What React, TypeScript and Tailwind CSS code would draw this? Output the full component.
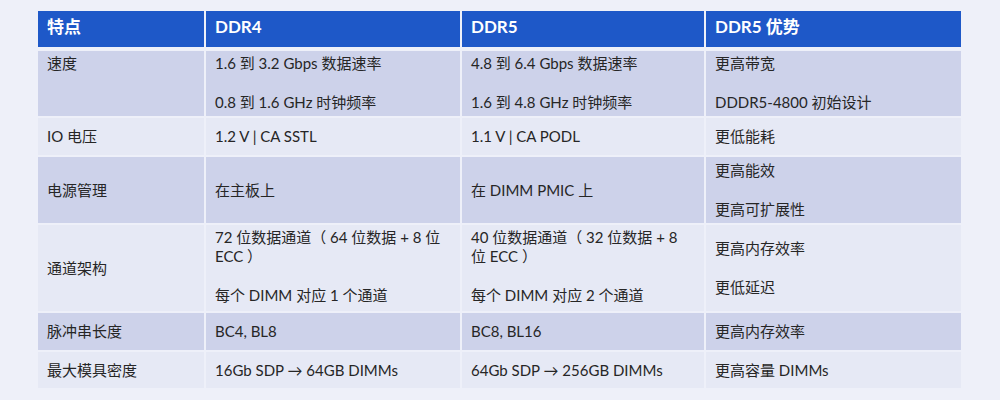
import React from "react";

type Cell = {
  lines: string[];
  align?: "top" | "center";
};

const rows: { bg: string; h: string; cells: Cell[] }[] = [
  {
    bg: "bg-[#cdd2ea]",
    h: "h-[65px]",
    cells: [
      { lines: ["速度"], align: "top" },
      { lines: ["1.6 到 3.2 Gbps 数据速率", "0.8 到 1.6 GHz 时钟频率"], align: "top" },
      { lines: ["4.8 到 6.4 Gbps 数据速率", "1.6 到 4.8 GHz 时钟频率"], align: "top" },
      { lines: ["更高带宽", "DDDR5-4800 初始设计"], align: "top" },
    ],
  },
  {
    bg: "bg-[#e6e9f5]",
    h: "h-[37px]",
    cells: [
      { lines: ["IO 电压"] },
      { lines: ["1.2 V | CA SSTL"] },
      { lines: ["1.1 V | CA PODL"] },
      { lines: ["更低能耗"] },
    ],
  },
  {
    bg: "bg-[#cdd2ea]",
    h: "h-[66px]",
    cells: [
      { lines: ["电源管理"] },
      { lines: ["在主板上"] },
      { lines: ["在  DIMM PMIC 上"] },
      { lines: ["更高能效", "更高可扩展性"] },
    ],
  },
  {
    bg: "bg-[#e6e9f5]",
    h: "h-[86px]",
    cells: [
      { lines: ["通道架构"] },
      { lines: ["72 位数据通道（ 64 位数据 + 8 位\nECC ）", "每个 DIMM 对应 1 个通道"], align: "top" },
      { lines: ["40 位数据通道（ 32 位数据 + 8\n位 ECC ）", "每个 DIMM 对应 2 个通道"], align: "top" },
      { lines: ["更高内存效率", "更低延迟"] },
    ],
  },
  {
    bg: "bg-[#cdd2ea]",
    h: "h-[37px]",
    cells: [
      { lines: ["脉冲串长度"] },
      { lines: ["BC4, BL8"] },
      { lines: ["BC8, BL16"] },
      { lines: ["更高内存效率"] },
    ],
  },
  {
    bg: "bg-[#e6e9f5]",
    h: "h-[36px]",
    cells: [
      { lines: ["最大模具密度"] },
      { lines: ["16Gb SDP → 64GB DIMMs"] },
      { lines: ["64Gb SDP → 256GB DIMMs"] },
      { lines: ["更高容量 DIMMs"] },
    ],
  },
];

const headers = ["特点", "DDR4", "DDR5", "DDR5 优势"];

export default function App() {
  return (
    <div className="w-[1000px] h-[400px] bg-[#eef0f9] pt-[11px] pl-[38px] font-['Lato','Noto_Sans_CJK_SC',sans-serif] text-[#262626]">
      <div className="grid grid-cols-[166px_254px_242px_255px] gap-x-[2px] gap-y-[2px]">
        {headers.map((h) => (
          <div
            key={h}
            className="h-[36px] mb-[2px] bg-[#1e58c8] text-white font-bold text-[17px] leading-[22px] pl-[9px] pt-[5px]"
          >
            {h}
          </div>
        ))}
        {rows.map((r, ri) =>
          r.cells.map((c, ci) => (
            <div
              key={`${ri}-${ci}`}
              className={`${r.bg} ${r.h} pl-[9px] pr-[4px] flex flex-col text-[15px] leading-[19px] gap-[20px] ${
                c.align === "top" ? "justify-start pt-[3px]" : "justify-center"
              }`}
            >
              {c.lines.map((l) => (
                <p key={l} className="whitespace-pre-line">
                  {l}
                </p>
              ))}
            </div>
          ))
        )}
      </div>
    </div>
  );
}
